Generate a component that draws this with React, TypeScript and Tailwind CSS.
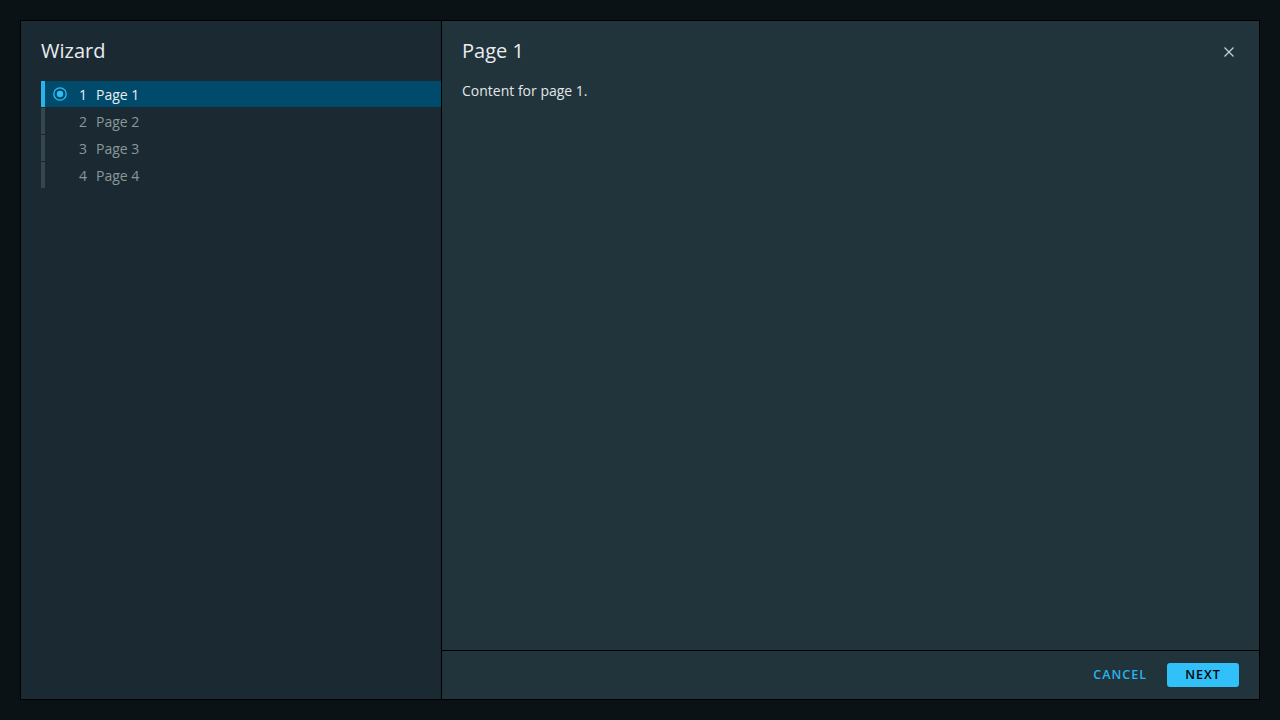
export default function App() {
  const pages = [1, 2, 3, 4]
  const current = 1

  return (
    <div className="w-[1280px] h-[720px] bg-[#0a1215] p-5 font-['Open_Sans','Noto_Sans',sans-serif]">
      <div className="flex h-full border border-black bg-[#21333b]">
        {/* Step nav */}
        <aside className="w-[421px] shrink-0 bg-[#1b2a32] border-r border-black pl-5 pt-[16px]">
          <h1 className="text-[20px] leading-[28px] text-[#e9ecef]">Wizard</h1>
          <nav className="mt-[16px] flex flex-col gap-px">
            {pages.map((n) => {
              const active = n === current
              return (
                <div
                  key={n}
                  className={`flex items-center h-[26px] border-l-4 ${
                    active ? 'border-[#2bb4eb] bg-[#004b6c] text-[#eaedf0]' : 'border-[#34474f] text-[#8c979c]'
                  } text-[14px]`}
                >
                  <span className="w-[22px] flex justify-end">
                    {active && (
                      <svg width="14" height="14" viewBox="0 0 14 14">
                        <circle cx="7" cy="7" r="6.2" fill="none" stroke="#2fbdf4" strokeWidth="1.3" />
                        <circle cx="7" cy="7" r="3.2" fill="#2fbdf4" />
                      </svg>
                    )}
                  </span>
                  <span className="w-[20px] text-right">{n}</span>
                  <span className="ml-[9px]">Page {n}</span>
                </div>
              )
            })}
          </nav>
        </aside>

        {/* Content */}
        <section className="flex-1 flex flex-col">
          <div className="flex-1 pl-5 pr-[25px] pt-[16px]">
            <div className="flex items-start justify-between">
              <h2 className="text-[20px] leading-[28px] text-[#e9ecef]">Page 1</h2>
              <button className="mt-[10px] text-[#c9d2d6]">
                <svg width="10" height="10" viewBox="0 0 10 10">
                  <path d="M0.5 0.5 L9.5 9.5 M9.5 0.5 L0.5 9.5" stroke="currentColor" strokeWidth="1.2" />
                </svg>
              </button>
            </div>
            <p className="mt-[15px] text-[14px] text-[#e2e6e8]">Content for page {current}.</p>
          </div>
          <footer className="h-[49px] border-t border-black flex items-center justify-end gap-5 pr-5">
            <button className="text-[12.5px] font-semibold tracking-[1px] text-[#2bb4eb]">CANCEL</button>
            <button className="w-[72px] h-[24px] rounded-[3px] bg-[#31c0f7] text-[12.5px] font-semibold tracking-[1px] text-black">
              NEXT
            </button>
          </footer>
        </section>
      </div>
    </div>
  )
}
